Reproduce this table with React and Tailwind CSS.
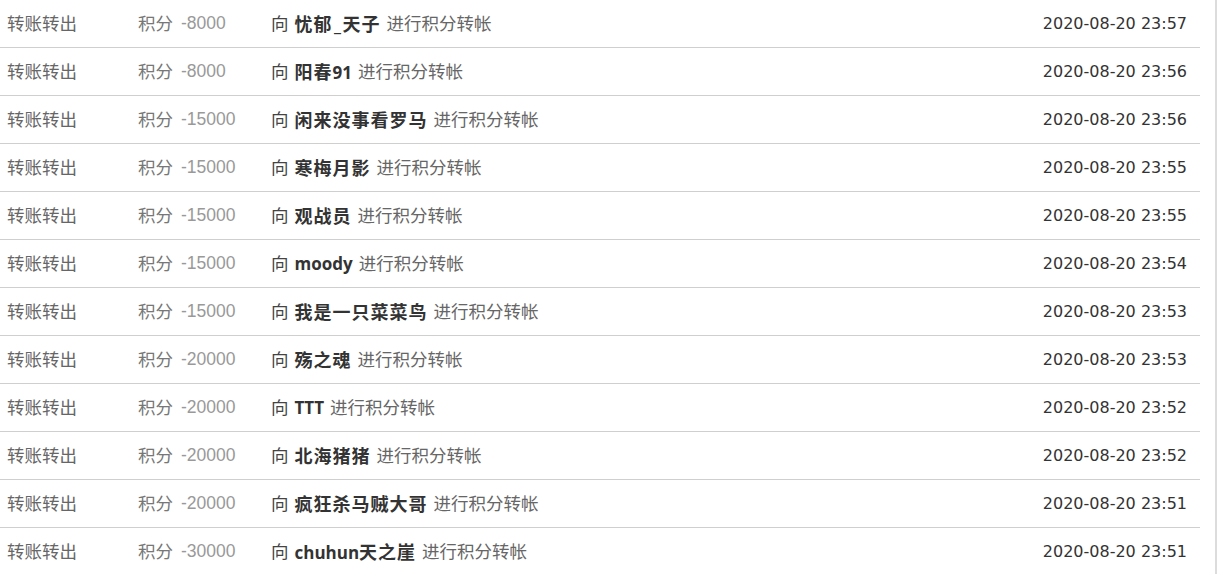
import React from "react";

const rows = [
  ["-8000", "忧郁_天子", "2020-08-20 23:57"],
  ["-8000", "阳春91", "2020-08-20 23:56"],
  ["-15000", "闲来没事看罗马", "2020-08-20 23:56"],
  ["-15000", "寒梅月影", "2020-08-20 23:55"],
  ["-15000", "观战员", "2020-08-20 23:55"],
  ["-15000", "moody", "2020-08-20 23:54"],
  ["-15000", "我是一只菜菜鸟", "2020-08-20 23:53"],
  ["-20000", "殇之魂", "2020-08-20 23:53"],
  ["-20000", "TTT", "2020-08-20 23:52"],
  ["-20000", "北海猪猪", "2020-08-20 23:52"],
  ["-20000", "疯狂杀马贼大哥", "2020-08-20 23:51"],
  ["-30000", "chuhun天之崖", "2020-08-20 23:51"],
];

function Name({ text }) {
  const runs = text.match(/[\u4e00-\u9fff]+|[^\u4e00-\u9fff]+/g) || [];
  return (
    <span className="ml-[6px] font-bold text-[#333] whitespace-nowrap">
      {runs.map((r, i) =>
        /[\u4e00-\u9fff]/.test(r) ? (
          <span key={i} className="text-[18px] tracking-[1px] font-['Noto_Sans_CJK_SC',sans-serif]">{r}</span>
        ) : (
          <span key={i} className="text-[17px] font-['Open_Sans',sans-serif]">{r === "_" ? <span className="inline-block w-[10px] text-center">_</span> : r}</span>
        )
      )}
    </span>
  );
}

export default function App() {
  return (
    <div className="flex h-[574px] w-[1217px] overflow-hidden bg-white">
      <div className="w-[1200px] shrink-0">
        {rows.map(([amt, name, date], i) => (
          <div
            key={i}
            className="flex h-12 items-center border-b border-[#cfcfcf] text-[17.5px] font-['Noto_Sans_CJK_SC',sans-serif]"
          >
            <div className="w-[138px] shrink-0 pl-[7px] text-[#666]">转账转出</div>
            <div className="w-[133px] shrink-0 flex items-center text-[#777]">
              <span>积分</span>
              <span className="ml-[8px] text-[17.5px] text-[#999] font-['Liberation_Sans',sans-serif]">{amt}</span>
            </div>
            <div className="flex-1 flex items-center whitespace-nowrap">
              <span className="text-[#444]">向</span>
              <Name text={name} />
              <span className="ml-[6px] text-[#666]">进行积分转帐</span>
            </div>
            <div className="pr-[13px] text-[16px] text-[#333] font-['DejaVu_Sans',sans-serif]">{date}</div>
          </div>
        ))}
      </div>
      <div className="flex-1" />
      <div className="w-[2px] h-full bg-[#dcdcdc]" />
    </div>
  );
}
